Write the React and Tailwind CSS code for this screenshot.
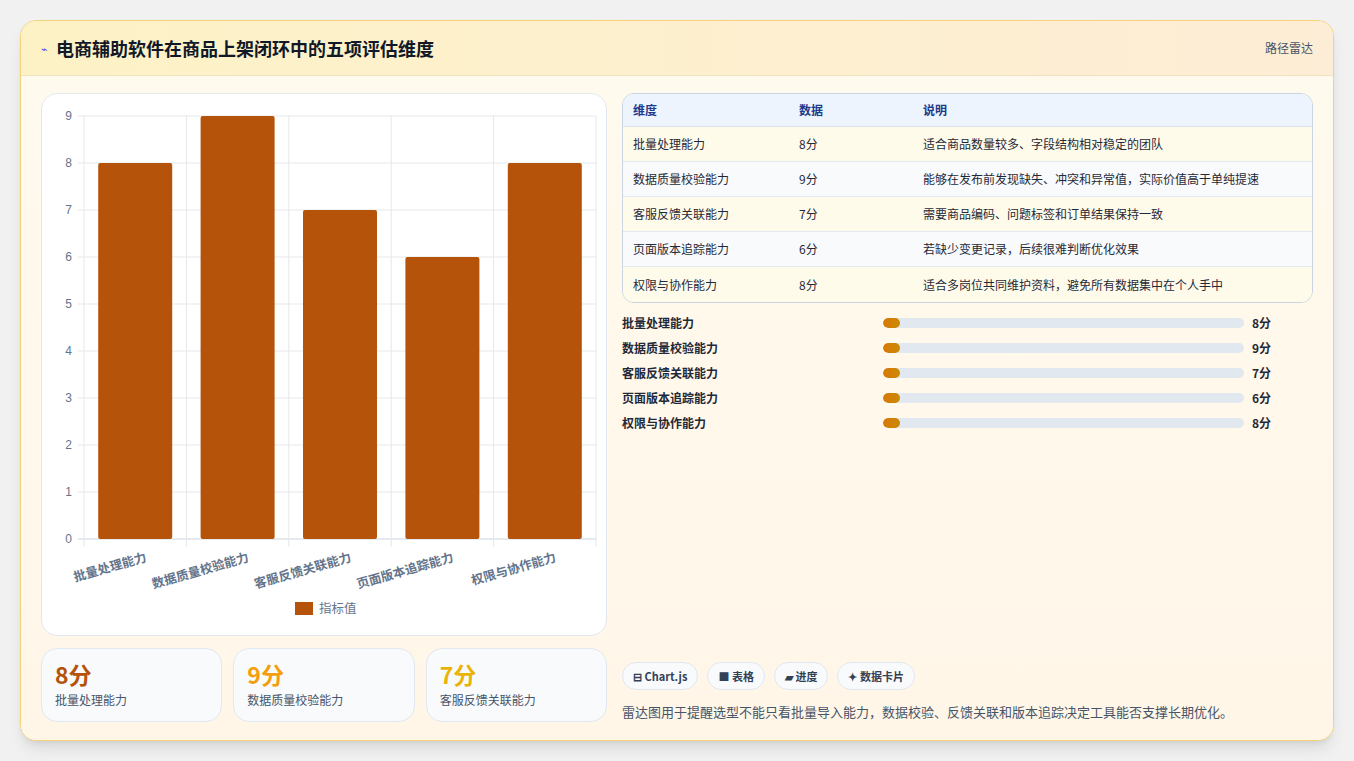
import React from "react";

const rows = [
  ["批量处理能力", 8, "适合商品数量较多、字段结构相对稳定的团队"],
  ["数据质量校验能力", 9, "能够在发布前发现缺失、冲突和异常值，实际价值高于单纯提速"],
  ["客服反馈关联能力", 7, "需要商品编码、问题标签和订单结果保持一致"],
  ["页面版本追踪能力", 6, "若缺少变更记录，后续很难判断优化效果"],
  ["权限与协作能力", 8, "适合多岗位共同维护资料，避免所有数据集中在个人手中"],
];

function Chart() {
  const x0 = 42, x1 = 554, yTop = 22, yBot = 445;
  const step = (yBot - yTop) / 9;
  const cw = (x1 - x0) / 5;
  return (
    <svg width="566" height="543" className="block">
      {Array.from({ length: 10 }).map((_, i) => {
        const y = yBot - i * step;
        return (
          <g key={i}>
            <line x1={x0 - 6} x2={x1} y1={y} y2={y} stroke={i === 0 ? "#cbd5e1" : "#e5e7eb"} />
            <text x={x0 - 12} y={y + 4} textAnchor="end" fontSize="12" fill="#64748b" fontFamily="Liberation Sans, sans-serif">{i}</text>
          </g>
        );
      })}
      {Array.from({ length: 6 }).map((_, i) => (
        <line key={i} x1={x0 + i * cw} x2={x0 + i * cw} y1={yTop} y2={yBot + 8} stroke="#e5e7eb" />
      ))}
      {rows.map((r, i) => {
        const h = r[1] * step;
        const cx = x0 + i * cw + cw / 2;
        return (
          <g key={i}>
            <rect x={cx - 37} y={yBot - h} width="74" height={h} rx="2" fill="#b45309" />
            <text x={cx + 12} y={yBot + 22} textAnchor="end" fontSize="12.5" fontWeight="bold" fill="#64748b" transform={`rotate(-16 ${cx + 12} ${yBot + 22})`} fontFamily="'Noto Sans CJK SC', sans-serif">{r[0]}</text>
          </g>
        );
      })}
      <rect x="253" y="508" width="18" height="13" fill="#b45309" />
      <text x="277" y="519" fontSize="12.5" fill="#64748b" fontFamily="'Noto Sans CJK SC', sans-serif">指标值</text>
    </svg>
  );
}

export default function App() {
  return (
    <div className="w-[1354px] h-[761px] bg-[#f1f1f1] p-5" style={{ fontFamily: "'Noto Sans CJK SC', 'Noto Sans', sans-serif" }}>
      <div className="h-[721px] rounded-2xl border border-[#f3d27a] overflow-hidden bg-[#fff8ec] flex flex-col shadow-lg">
        <div className="h-[55px] shrink-0 flex items-center justify-between px-5 bg-gradient-to-r from-[#fdf2c6] to-[#fdedd6] border-b border-[#f1e3c2]">
          <div className="flex items-center gap-2">
            <span className="text-[#4f46e5] text-[11px]">⌁</span>
            <span className="text-[18px] font-bold text-[#111827]">电商辅助软件在商品上架闭环中的五项评估维度</span>
          </div>
          <span className="text-[12px] text-[#475569]">路径雷达</span>
        </div>
        <div className="flex-1 flex gap-[15px] px-5 pt-[17px] pb-[18px] bg-gradient-to-b from-[#fffaee] to-[#fff6e8]">
          <div className="w-[566px] flex flex-col gap-3">
            <div className="h-[543px] rounded-2xl bg-white border border-[#e2e8f0]">
              <Chart />
            </div>
            <div className="grid grid-cols-3 gap-[11px] flex-1">
              {[["8分", "text-[#b45309]", "批量处理能力"], ["9分", "text-[#f59e0b]", "数据质量校验能力"], ["7分", "text-[#eab308]", "客服反馈关联能力"]].map(([v, c, l]) => (
                <div key={l} className="rounded-2xl border border-[#e2e8f0] bg-[#f8fafc] px-[13px] pt-[10px]">
                  <div className={`text-[23px] font-bold leading-[30px] ${c}`}>{v}</div>
                  <div className="text-[12px] text-[#475569] mt-[2px]">{l}</div>
                </div>
              ))}
            </div>
          </div>
          <div className="flex-1 flex flex-col">
            <div className="rounded-xl border border-[#cbd5e1] overflow-hidden text-[12px]">
              <div className="flex h-[33px] items-center bg-[#eef4fd] text-[#1e3a8a] font-bold border-b border-[#dbe3ef]">
                <div className="w-[166px] pl-[10px]">维度</div>
                <div className="w-[124px] pl-[10px]">数据</div>
                <div className="pl-[10px]">说明</div>
              </div>
              {rows.map((r, i) => (
                <div key={i} className={`flex h-[35px] items-center text-[#1f2937] ${i % 2 ? "bg-[#f8fafc]" : "bg-[#fffbeb]"} ${i < 4 ? "border-b border-[#e2e8f0]" : ""}`}>
                  <div className="w-[166px] pl-[10px]">{r[0]}</div>
                  <div className="w-[124px] pl-[10px]">{r[1]}分</div>
                  <div className="pl-[10px]">{r[2]}</div>
                </div>
              ))}
            </div>
            <div className="mt-[11px] flex flex-col gap-[7px]">
              {rows.map((r, i) => (
                <div key={i} className="flex items-center h-[18px] text-[12px] font-bold text-[#1f2937]">
                  <div className="w-[261px]">{r[0]}</div>
                  <div className="w-[361px] h-[10px] rounded-full bg-[#e2e8f0] overflow-hidden">
                    <div className="h-full w-[17px] rounded-full bg-gradient-to-r from-[#d97706] to-[#ca8a04]" />
                  </div>
                  <div className="ml-[8px]">{r[1]}分</div>
                </div>
              ))}
            </div>
            <div className="mt-auto flex gap-[9px]">
              {["⊟ Chart.js", "■ 表格", "▰ 进度", "✦ 数据卡片"].map((t) => (
                <span key={t} className="h-[28px] flex items-center px-[10px] rounded-full border border-[#e2e8f0] bg-[#f8fafc] text-[11px] font-bold text-[#334155]">{t}</span>
              ))}
            </div>
            <div className="mt-[12px] text-[13px] text-[#475569] leading-[20px]">雷达图用于提醒选型不能只看批量导入能力，数据校验、反馈关联和版本追踪决定工具能否支撑长期优化。</div>
          </div>
        </div>
      </div>
    </div>
  );
}
